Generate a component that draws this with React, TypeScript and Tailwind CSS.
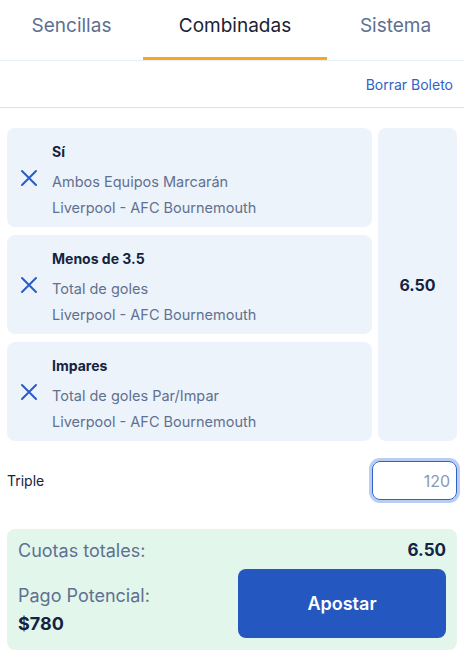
const font = { fontFamily: 'Inter, "Noto Sans", sans-serif' };

interface Selection {
    pick: string;
    market: string;
    event: string;
}

const selections: Selection[] = [
    { pick: 'Sí', market: 'Ambos Equipos Marcarán', event: 'Liverpool - AFC Bournemouth' },
    { pick: 'Menos de 3.5', market: 'Total de goles', event: 'Liverpool - AFC Bournemouth' },
    { pick: 'Impares', market: 'Total de goles Par/Impar', event: 'Liverpool - AFC Bournemouth' },
];

function CloseIcon() {
    return (
        <svg width="18" height="18" viewBox="0 0 18 18" fill="none">
            <path d="M2 2L16 16M16 2L2 16" stroke="#2a5bc8" strokeWidth="2" strokeLinecap="round" />
        </svg>
    );
}

function SelectionCard({ item }: { item: Selection }) {
    return (
        <div className="flex h-[99px] items-center rounded-lg bg-[#edf3fb]">
            <div className="flex w-[45px] shrink-0 justify-center pr-[2px]">
                <CloseIcon />
            </div>
            <div className="flex flex-col pt-[4px]">
                <span className="text-[14px] font-bold leading-5 text-[#14233f]">{item.pick}</span>
                <span className="mt-[10px] text-[14.5px] leading-5 text-[#5f7190]">{item.market}</span>
                <span className="mt-[6px] text-[14.5px] leading-5 text-[#5f7190]">{item.event}</span>
            </div>
        </div>
    );
}

export default function App() {
    return (
        <div className="h-[664px] w-[464px] bg-white" style={font}>
            <div className="flex h-[61px] border-b border-[#e8eef7]">
                <div className="flex w-[143px] items-center justify-center pb-[8px] text-[19px] text-[#5d7090]">
                    Sencillas
                </div>
                <div className="flex w-[184px] items-center justify-center border-b-[3px] border-[#f5a81c] pb-[5px] text-[19px] text-[#1a2233]">
                    Combinadas
                </div>
                <div className="flex flex-1 items-center justify-center pb-[8px] text-[19px] text-[#5d7090]">
                    Sistema
                </div>
            </div>
            <div className="flex h-[47px] items-center justify-end border-b border-[#dcdfe4] pr-[11px] text-[14px] text-[#2f62c8]">
                Borrar Boleto
            </div>
            <div className="flex gap-[6px] px-[7px] pt-[20px]">
                <div className="flex flex-1 flex-col gap-[8px]">
                    {selections.map((item) => (
                        <SelectionCard key={item.pick} item={item} />
                    ))}
                </div>
                <div className="flex w-[79px] items-center justify-center rounded-lg bg-[#edf3fb] text-[16px] font-bold text-[#14233f]">
                    6.50
                </div>
            </div>
            <div className="mt-[20px] flex items-center justify-between pl-[7px] pr-[7px]">
                <span className="text-[14px] text-[#14233f]">Triple</span>
                <div className="flex h-[39px] w-[85px] items-center justify-end rounded-lg border-[1.5px] border-[#2f62c8] pr-[6px] text-[16px] text-[#8a9ab3] shadow-[0_0_0_3px_#b9cdf1]">
                    120
                </div>
            </div>
            <div className="mx-[7px] mt-[29px] flex h-[121px] flex-col rounded-lg bg-[#e3f6ec] px-[11px] pt-[8px]">
                <div className="flex items-center justify-between">
                    <span className="text-[18px] text-[#5f7190]">Cuotas totales:</span>
                    <span className="text-[17px] font-bold text-[#14233f]">6.50</span>
                </div>
                <div className="flex justify-between">
                    <div className="flex flex-col pt-[18px]">
                        <span className="text-[18px] leading-7 text-[#5f7190]">Pago Potencial:</span>
                        <span className="text-[18px] font-bold leading-7 text-[#14233f]">$780</span>
                    </div>
                    <button className="mt-[5px] flex h-[69px] w-[208px] items-center justify-center rounded-lg bg-[#2557c0] text-[18px] font-semibold text-white">
                        Apostar
                    </button>
                </div>
            </div>
        </div>
    );
}
